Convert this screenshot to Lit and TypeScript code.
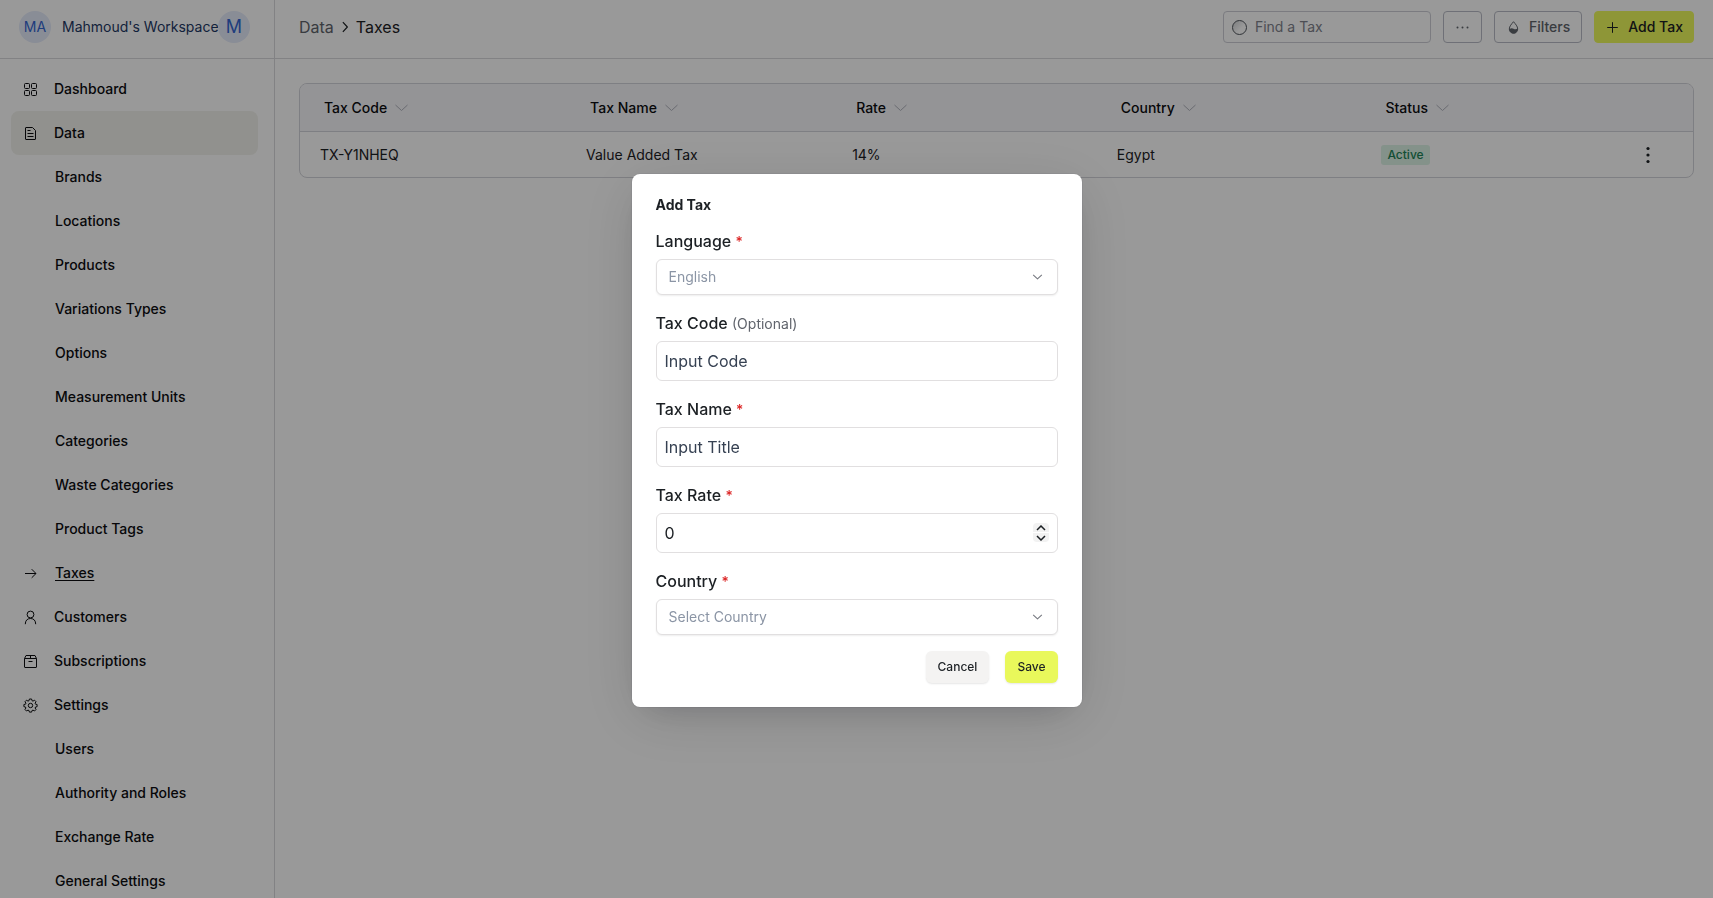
import { LitElement, html, css, svg, nothing, TemplateResult } from "lit";
import { customElement, property, state } from "lit/decorators.js";
import { classMap } from "lit/directives/class-map.js";

const icons: Record<string, TemplateResult> = {
  grid: svg`<rect x="1.5" y="1.5" width="5" height="5" rx="1"/><rect x="8.5" y="1.5" width="5" height="5" rx="1"/><rect x="1.5" y="8.5" width="5" height="5" rx="1"/><rect x="8.5" y="8.5" width="5" height="5" rx="1"/>`,
  file: svg`<path d="M3 1.5h6.5l3 3V13a.5.5 0 0 1-.5.5H3a.5.5 0 0 1-.5-.5V2a.5.5 0 0 1 .5-.5z"/><path d="M4.5 4.5h3M4.5 7.5h6M4.5 10.5h6"/>`,
  arrow: svg`<path d="M2 7.5h11M8.7 3.2L13 7.5l-4.3 4.3"/>`,
  user: svg`<circle cx="7.5" cy="4.5" r="3.4"/><path d="M2.3 14.2c0-3.7 2-5.700 5.200-5.700s5.200 2 5.200 5.700"/>`,
  box: svg`<path d="M1.500 4.500v8.500a.5.5 0 0 0 .5.500h11a.5.500 0 0 0 .5-.500V4.500zM1.500 4.500L3 1.500h9l1.500 3M7.500 1.500v3M5.500 7.500h4"/>`,
  gear: svg`<circle cx="7.5" cy="7.500" r="2.200"/><path d="M6.400 1h2.200l.4 1.700 1 .4 1.500-.9 1.500 1.500-.9 1.500.4 1 1.600.3v2.200l-1.600.3-.4 1 .9 1.500-1.500 1.500-1.500-.9-1 .4-.4 1.600H6.400l-.4-1.600-1-.4-1.500.9L2 11.500l.9-1.500-.4-1L.9 8.700V6.500l1.600-.3.4-1L2 3.700l1.500-1.500 1.500.9 1-.4z"/>`,
  sort: svg`<path d="M1.500 5l6 5.500 6-5.500"/>`,
  chevronDown: svg`<path d="M2.500 5.500l5 4.800 5-4.800"/>`,
  chevronRight: svg`<path d="M5.500 3l4.200 4.500L5.500 12"/>`,
  plus: svg`<path d="M7.500 2.200v10.600M2.200 7.500h10.600"/>`,
  dots: svg`<g fill="currentColor" stroke="none"><circle cx="2.500" cy="7.500" r="1"/><circle cx="7.500" cy="7.500" r="1"/><circle cx="12.500" cy="7.500" r="1"/></g>`,
  drop: svg`<path d="M7.500 1.700C5.600 4 3.300 6.300 3.300 9a4.200 4.200 0 0 0 8.400 0c0-2.700-2.300-5-4.200-7.300z"/><path fill="currentColor" stroke="none" d="M3.300 9.400Q5.300 7.600 7.500 8.800T11.700 8.600a4.200 4.600 0 0 1-8.400.8z"/>`,
};

const icon = (name: string, size = 15, weight = 1) => html`<svg
  class="icon" width=${size} height=${size} viewBox="0 0 15 15" fill="none"
  stroke="currentColor" stroke-width=${weight} stroke-linejoin="round" aria-hidden="true"
>${icons[name]}</svg>`;

const base = css`
  *, *::before, *::after { box-sizing: border-box; }
  button, input, select { font: inherit; color: inherit; margin: 0; }
  button { cursor: pointer; }
  a { color: inherit; text-decoration: none; }
  .icon { display: block; flex: none; }
`;

interface NavItem { label: string; icon?: string; sub?: boolean; active?: boolean; current?: boolean; }

const NAV: NavItem[] = [
  { label: "Dashboard", icon: "grid" },
  { label: "Data", icon: "file", active: true },
  { label: "Brands", sub: true },
  { label: "Locations", sub: true },
  { label: "Products", sub: true },
  { label: "Variations Types", sub: true },
  { label: "Options", sub: true },
  { label: "Measurement Units", sub: true },
  { label: "Categories", sub: true },
  { label: "Waste Categories", sub: true },
  { label: "Product Tags", sub: true },
  { label: "Taxes", icon: "arrow", sub: true, current: true },
  { label: "Customers", icon: "user" },
  { label: "Subscriptions", icon: "box" },
  { label: "Settings", icon: "gear" },
  { label: "Users", sub: true },
  { label: "Authority and Roles", sub: true },
  { label: "Exchange Rate", sub: true },
  { label: "General Settings", sub: true },
];

@customElement("side-bar")
class SideBar extends LitElement {
  static styles = [base, css`
    :host { display: flex; flex-direction: column; min-height: 0; border-right: 1px solid #d9d9dc; }
    .workspace { display: flex; align-items: center; height: 59px; padding: 0 24px 4px 19px; border-bottom: 1px solid #d9d9dc; }
    .avatar { display: grid; place-items: center; flex: none; width: 32px; height: 32px; border-radius: 50%; background: #e4ebfb; color: #3566d0; font-size: 14px; }
    .avatar.large { font-size: 18px; }
    .name { flex: 1; min-width: 0; padding-left: 11px; font-size: 14px; color: #1d3864; white-space: nowrap; }
    nav { flex: 1; min-height: 0; overflow-y: auto; scrollbar-width: none; padding: 8px 16px 8px 11px; color: #0c0d0f; }
    .item { display: grid; grid-template-columns: 31px 1fr; align-items: center; height: 44px; padding-left: 12px; border-radius: 8px; font-weight: 500; }
    .item.sub { grid-template-columns: 32px 1fr; }
    .item.active { background: #f2f2ed; }
    .label { grid-column: 2; }
    .item.current .label { text-decoration: underline; text-underline-offset: 2px; }
  `];

  render() {
    return html`
      <div class="workspace">
        <span class="avatar">MA</span>
        <span class="name">Mahmoud's Workspace</span>
        <span class="avatar large">M</span>
      </div>
      <nav aria-label="Main">
        ${NAV.map((n) => html`
          <a href="#" class=${classMap({ item: true, sub: !!n.sub, active: !!n.active, current: !!n.current })}
            aria-current=${n.current ? "page" : nothing}>
            ${n.icon ? icon(n.icon) : nothing}
            <span class="label">${n.label}</span>
          </a>`)}
      </nav>`;
  }
}

@customElement("tax-toolbar")
class TaxToolbar extends LitElement {
  static styles = [base, css`
    :host { display: flex; align-items: center; gap: 12px; height: 59px; padding: 0 19px 4px 24px; border-bottom: 1px solid #d9d9dc; }
    .crumbs { display: flex; align-items: center; gap: 3px; margin-right: auto; font-size: 16px; }
    .crumbs a { color: #60646c; }
    .search { display: flex; align-items: center; gap: 8px; width: 208px; height: 32px; padding: 0 8px; border: 1px solid #cdced6; border-radius: 4px; }
    .search input { flex: 1; min-width: 0; padding: 0; border: 0; outline: 0; background: none; }
    .search input::placeholder { color: #80838d; opacity: 1; }
    .ring { flex: none; width: 15px; height: 15px; border: 1px solid #50555c; border-radius: 50%; background: linear-gradient(135deg, #d0d2d5, #fff 60%); }
    .btn { display: flex; align-items: center; gap: 8px; height: 32px; padding: 0 11px; border: 1px solid #b9bbc6; border-radius: 4px; background: none; color: #60646c; font-weight: 500; }
    .primary { padding: 0 10px; border-color: #edfa5c; background: #edfa5c; color: #1c2024; }
  `];

  render() {
    return html`
      <div class="crumbs">
        <a href="#">Data</a>${icon("chevronRight", 16, 1.1)}<span>Taxes</span>
      </div>
      <label class="search">
        <span class="ring"></span>
        <input type="search" placeholder="Find a Tax" aria-label="Find a Tax" />
      </label>
      <button class="btn" aria-label="More actions">${icon("dots")}</button>
      <button class="btn">${icon("drop")}Filters</button>
      <button class="btn primary">${icon("plus")}Add Tax</button>`;
  }
}

@customElement("tax-table")
class TaxTable extends LitElement {
  @property({ attribute: false }) rows = [
    { code: "TX-Y1NHEQ", name: "Value Added Tax", rate: "14%", country: "Egypt", status: "Active" },
  ];

  static styles = [base, css`
    :host { display: block; padding: 24px 19px 24px 24px; }
    .frame { border: 1px solid #d3d4da; border-radius: 8px; overflow: hidden; }
    table { width: 100%; table-layout: fixed; border-collapse: separate; border-spacing: 0; text-align: left; }
    col { width: 19%; }
    col.wide { width: 19.1%; }
    col.rest { width: auto; }
    th { height: 48px; padding: 0 24px; border-bottom: 1px solid #d3d4da; background: #f7f7fb; color: #0c0d0f; font-weight: 500; }
    td { height: 45px; padding: 0 20px; }
    .head { display: flex; align-items: center; gap: 7px; }
    .head .icon { color: #b0b2bb; }
    .badge { display: inline-block; padding: 2px 6px; border-radius: 3px; background: #dcf3e6; color: #218358; font-size: 12px; line-height: 16px; font-weight: 500; }
    .more { display: grid; place-items: center; width: 4px; height: 24px; padding: 0; border: 0; background: none; }
  `];

  render() {
    return html`<div class="frame"><table>
      <colgroup><col class="wide" /><col class="wide" /><col /><col /><col /><col class="rest" /></colgroup>
      <thead><tr>
        ${["Tax Code", "Tax Name", "Rate", "Country", "Status"].map((h) => html`
          <th scope="col"><span class="head">${h}${icon("sort")}</span></th>`)}
        <th scope="col" aria-label="Actions"></th>
      </tr></thead>
      <tbody>
        ${this.rows.map((r) => html`<tr>
          <td>${r.code}</td><td>${r.name}</td><td>${r.rate}</td><td>${r.country}</td>
          <td><span class="badge">${r.status}</span></td>
          <td><button class="more" aria-label="Row actions">
            <svg class="icon" width="4" height="18" viewBox="0 0 4 18" fill="currentColor"><circle cx="2" cy="2.500" r="1.600"/><circle cx="2" cy="9" r="1.600"/><circle cx="2" cy="15.500" r="1.600"/></svg>
          </button></td>
        </tr>`)}
      </tbody>
    </table></div>`;
  }
}

@customElement("tax-dialog")
class TaxDialog extends LitElement {
  @state() private rate = 0;

  static styles = [base, css`
    :host { position: fixed; inset: 0; display: grid; place-items: center; padding: 16px 16px 34px; background: rgba(0, 0, 0, 0.4); }
    form { width: 100%; max-width: 450px; padding: 22px 24px 24px; display: flex; flex-direction: column; gap: 16px; border-radius: 8px; background: #fff;
      box-shadow: 0 0 0 1px rgba(0, 0, 40, 0.05), 0 12px 60px rgba(0, 0, 0, 0.12), 0 12px 32px -16px rgba(0, 6, 46, 0.2); }
    h2 { margin: 0; font-size: 14px; line-height: 17px; font-weight: 700; }
    .field { display: flex; flex-direction: column; gap: 6px; }
    label { font-size: 16px; line-height: 24px; font-weight: 500; }
    .req { color: #dc2626; font-size: 14px; line-height: 16px; }
    .opt { color: #60646c; font-size: 14px; line-height: 16px; font-weight: 400; }
    .control { display: grid; align-items: center; }
    .control > * { grid-area: 1 / 1; }
    .control > .icon, .control > .stepper { justify-self: end; }
    .control > .icon { margin-right: 14px; color: #74777e; pointer-events: none; }
    input, select { width: 100%; border: 1px solid #e1dfe0; border-radius: 6px; background: #fff; outline-color: #c9d63f; }
    input { height: 40px; padding: 0 8px; font-size: 16px; appearance: textfield; }
    input::placeholder { color: #364152; opacity: 1; }
    input::-webkit-inner-spin-button { appearance: none; margin: 0; }
    select { height: 36px; padding: 0 36px 0 12px; appearance: none; color: #8b95a5; opacity: 1; box-shadow: 0 1px 2px rgba(0, 0, 0, 0.07); }
    .stepper { display: flex; flex-direction: column; gap: 1px; margin-right: 9px; border-radius: 4px; overflow: hidden; }
    .stepper button { display: grid; place-items: center; width: 16px; height: 9px; padding: 0; border: 0; background: #f2f2f2; }
    .actions { display: flex; justify-content: flex-end; gap: 16px; }
    .actions button { height: 32px; padding: 0 12px; border: 0; border-radius: 6px; background: #f4f3f2; font-size: 12px; font-weight: 500; box-shadow: 0 1px 2px rgba(0, 0, 0, 0.1); }
    .actions .save { background: #e9f85b; }
  `];

  private required = html`<span class="req">*</span>`;

  private arrow(up: boolean) {
    return html`<svg class="icon" width="10" height="6" viewBox="0 0 10 6" fill="none" stroke="currentColor" stroke-width="1.500"><path d=${up ? "M1 5l4-4 4 4" : "M1 1l4 4 4-4"} /></svg>`;
  }

  render() {
    return html`
      <form role="dialog" aria-modal="true" aria-labelledby="title" @submit=${(e: Event) => e.preventDefault()}>
        <h2 id="title">Add Tax</h2>
        <div class="field">
          <label for="language">Language ${this.required}</label>
          <div class="control">
            <select id="language"><option>English</option></select>${icon("chevronDown", 13, 1.2)}
          </div>
        </div>
        <div class="field">
          <label for="code">Tax Code <span class="opt">(Optional)</span></label>
          <input id="code" type="text" placeholder="Input Code" />
        </div>
        <div class="field">
          <label for="name">Tax Name ${this.required}</label>
          <input id="name" type="text" placeholder="Input Title" />
        </div>
        <div class="field">
          <label for="rate">Tax Rate ${this.required}</label>
          <div class="control">
            <input id="rate" type="number" .value=${String(this.rate)}
              @input=${(e: Event) => (this.rate = Number((e.target as HTMLInputElement).value))} />
            <div class="stepper">
              <button type="button" aria-label="Increase" @click=${() => this.rate++}>${this.arrow(true)}</button>
              <button type="button" aria-label="Decrease" @click=${() => this.rate--}>${this.arrow(false)}</button>
            </div>
          </div>
        </div>
        <div class="field">
          <label for="country">Country ${this.required}</label>
          <div class="control">
            <select id="country"><option value="">Select Country</option><option>Egypt</option></select>${icon("chevronDown", 13, 1.2)}
          </div>
        </div>
        <div class="actions">
          <button type="button">Cancel</button>
          <button type="submit" class="save">Save</button>
        </div>
      </form>`;
  }
}

@customElement("app-root")
class AppRoot extends LitElement {
  static styles = [base, css`
    :host { display: grid; grid-template-columns: 275px minmax(0, 1fr); grid-template-rows: minmax(0, 1fr); height: 100vh; overflow: hidden;
      background: #fff; color: #1c2024; font: 400 14px/20px Inter, sans-serif; }
    main { min-width: 0; }
  `];

  render() {
    return html`
      <side-bar></side-bar>
      <main><tax-toolbar></tax-toolbar><tax-table></tax-table></main>
      <tax-dialog></tax-dialog>`;
  }
}
